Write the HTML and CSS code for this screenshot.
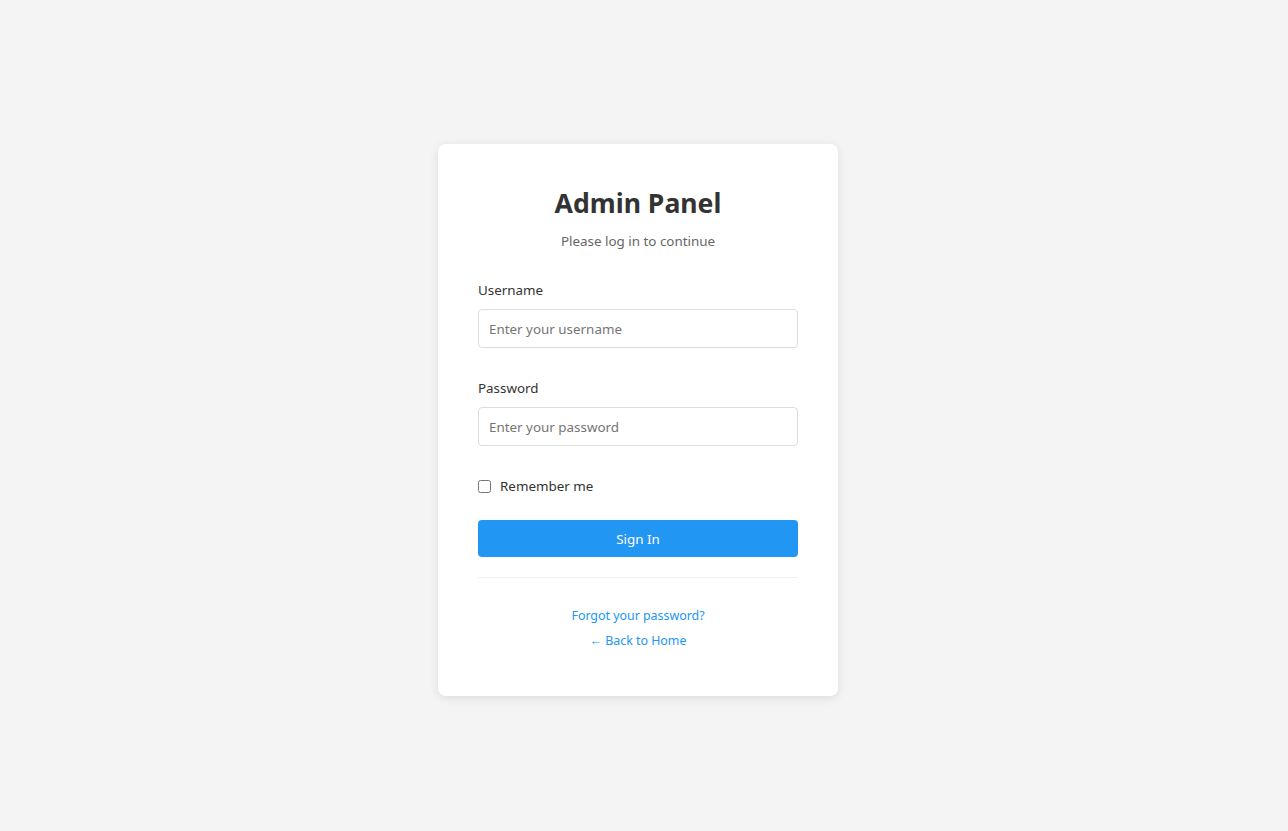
FILE: index.html
```html
<!DOCTYPE html>
<html lang="en">
<head>
<meta charset="utf-8">
<title>Admin Panel</title>
<link rel="stylesheet" href="styles.css">
</head>
<body>
<main class="page">
  <div class="card">
    <h1 class="title">Admin Panel</h1>
    <p class="subtitle">Please log in to continue</p>
    <form class="form">
      <div class="group">
        <label class="label" for="username">Username</label>
        <input class="input" id="username" type="text" placeholder="Enter your username">
      </div>
      <div class="group">
        <label class="label" for="password">Password</label>
        <input class="input" id="password" type="password" placeholder="Enter your password">
      </div>
      <label class="remember">
        <input class="check" type="checkbox">
        <span>Remember me</span>
      </label>
      <button class="btn" type="button">Sign In</button>
    </form>
    <div class="links">
      <a class="link" href="#">Forgot your password?</a>
      <a class="link" href="#">← Back to Home</a>
    </div>
  </div>
</main>
</body>
</html>
```
FILE: styles.css
```css
* { box-sizing: border-box; }
html, body { margin: 0; padding: 0; }
body {
  background: #f4f4f4;
  font-family: "Segoe UI", "Noto Sans", "Open Sans", sans-serif;
  color: #333;
  min-height: 831px;
}
.page {
  display: flex;
  justify-content: center;
  padding-top: 144px;
  padding-right: 12px;
}
.card {
  width: 400px;
  background: #fff;
  border-radius: 8px;
  box-shadow: 0 2px 10px rgba(0, 0, 0, 0.1);
  padding: 40px 40px 45px;
}
.title {
  margin: 0;
  font-size: 26.6px;
  line-height: 39px;
  font-weight: 700;
  text-align: center;
  color: #333;
}
.subtitle {
  margin: 8px 0 0;
  font-size: 13.4px;
  line-height: 20px;
  text-align: center;
  color: #666;
}
.form {
  display: flex;
  flex-direction: column;
  margin-top: 29px;
}
.group {
  display: flex;
  flex-direction: column;
  margin-bottom: 30px;
}
.label {
  font-size: 13.4px;
  line-height: 20px;
  color: #333;
  margin-bottom: 9px;
}
.input {
  height: 39px;
  border: 1px solid #ddd;
  border-radius: 4px;
  padding: 0 10px;
  font-family: inherit;
  font-size: 13.4px;
  color: #333;
  background: #fff;
  outline: none;
}
.input::placeholder { color: #757575; }
.remember {
  display: flex;
  align-items: center;
  height: 20px;
  font-size: 13.4px;
  color: #333;
}
.check {
  width: 13px;
  height: 13px;
  margin: 0 9px 0 0;
}
.btn {
  margin-top: 24px;
  height: 37px;
  border: none;
  border-radius: 4px;
  background: #2196f3;
  color: #fff;
  font-family: inherit;
  font-size: 13.4px;
  cursor: pointer;
}
.links {
  margin-top: 20px;
  border-top: 1px solid #eee;
  padding-top: 28px;
  display: flex;
  flex-direction: column;
  align-items: center;
  gap: 5px;
}
.link {
  font-size: 12.4px;
  line-height: 20px;
  color: #2196f3;
  text-decoration: none;
}
```
